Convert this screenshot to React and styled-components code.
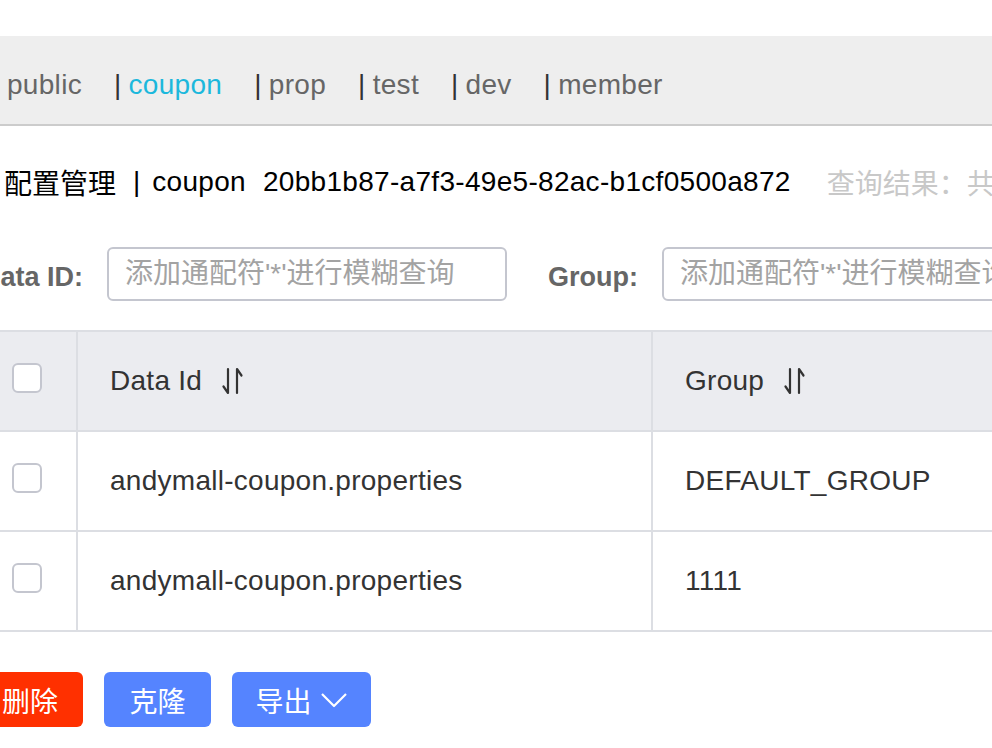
import styled, { createGlobalStyle } from "styled-components"

const GlobalStyle = createGlobalStyle`
    html, body {
        margin: 0;
        padding: 0;
        background: #FFFFFF;
        overflow: hidden;
    }
    body {
        font-family: "Liberation Sans", Arial, "Noto Sans CJK SC", sans-serif;
        color: #333333;
    }
`

const tabs = ["public", "coupon", "prop", "test", "dev", "member"]

const rows = [
    { id: "andymall-coupon.properties", group: "DEFAULT_GROUP" },
    { id: "andymall-coupon.properties", group: "1111" },
]

function SortIcon(){
    return(
        <Sort width="22" height="30" viewBox="0 0 22 30">
            <path d="M6 3 L6 27 L1.5 20.5" fill="none" stroke="#333" strokeWidth="2.2" strokeLinecap="round" strokeLinejoin="round"/>
            <path d="M15 27 L15 3 L19.5 9.5" fill="none" stroke="#333" strokeWidth="2.2" strokeLinecap="round" strokeLinejoin="round"/>
        </Sort>
    )
}

export default function App(){
    return(
        <>
            <GlobalStyle/>
            <Page>
                <TabBar>
                    {tabs.map((tab, i) => (
                        <Tab key={tab}>
                            {i > 0 && <TabSep>|</TabSep>}
                            <TabName $active={tab === "coupon"}>{tab}</TabName>
                        </Tab>
                    ))}
                </TabBar>

                <Title>
                    <span>配置管理</span>
                    <TitleSep>|</TitleSep>
                    <Latin>coupon</Latin>
                    <Uuid>20bb1b87-a7f3-49e5-82ac-b1cf0500a872</Uuid>
                    <Result>查询结果：共</Result>
                </Title>

                <Search>
                    <Label>Data ID:</Label>
                    <Input placeholder="添加通配符'*'进行模糊查询" $width={400}/>
                    <Label $gap={41}>Group:</Label>
                    <Input placeholder="添加通配符'*'进行模糊查询" $width={400}/>
                </Search>

                <Table>
                    <Row $head>
                        <Cell $center><Check/></Cell>
                        <Cell>Data Id<SortIcon/></Cell>
                        <Cell $last>Group<SortIcon/></Cell>
                    </Row>
                    {rows.map((r, i) => (
                        <Row key={i}>
                            <Cell $center><Check/></Cell>
                            <Cell>{r.id}</Cell>
                            <Cell $last>{r.group}</Cell>
                        </Row>
                    ))}
                </Table>

                <Actions>
                    <Button $color="#FF3000" $width={106}>删除</Button>
                    <Button $color="#5584FF" $width={107}>克隆</Button>
                    <Button $color="#5584FF" $width={139}>
                        导出
                        <svg width="28" height="16" viewBox="0 0 28 16">
                            <path d="M2 2 L14 14 L26 2" fill="none" stroke="#fff" strokeWidth="2.2" strokeLinejoin="round"/>
                        </svg>
                    </Button>
                </Actions>
            </Page>
        </>
    )
}

const Page = styled.div`
    width: 1500px;
    margin-left: -23px;
    padding-top: 36px;
`

const TabBar = styled.div`
    height: 90px;
    box-sizing: border-box;
    padding: 10px 0 0 30px;
    background: #EEEEEE;
    border-bottom: 2px solid #CCCCCC;
    display: flex;
    align-items: center;
    font-size: 28px;
    letter-spacing: 0.3px;
`

const Tab = styled.div`
    display: flex;
    align-items: center;
    margin-right: 32px;
`

const TabSep = styled.span`
    color: #333333;
    margin-right: 7px;
`

const TabName = styled.span`
    color: ${props => props.$active ? "#1CB8DC" : "#666666"};
`

const Title = styled.div`
    height: 56px;
    margin-top: 28px;
    padding-left: 27px;
    display: flex;
    align-items: center;
    font-size: 28px;
    color: #000000;
    white-space: nowrap;
`

const TitleSep = styled.span`
    margin: 0 12px 0 17px;
`

const Latin = styled.span`
    letter-spacing: 0.3px;
`

const Uuid = styled(Latin)`
    margin-left: 17px;
`

const Result = styled.span`
    margin-left: 36px;
    color: #C8C8C8;
`

const Search = styled.div`
    margin-top: 37px;
    padding-left: 4px;
    height: 54px;
    display: flex;
    align-items: center;
`

const Label = styled.label`
    font-size: 27px;
    font-weight: bold;
    color: #666666;
    margin-left: ${props => props.$gap || 0}px;
    margin-right: 24px;
    padding-top: 6px;
`

const Input = styled.input`
    width: ${props => props.$width}px;
    height: 54px;
    box-sizing: border-box;
    border: 2px solid #C4C6CF;
    border-radius: 6px;
    padding: 0 16px;
    font-family: inherit;
    font-size: 28px;
    outline: none;

    &::placeholder{
        color: #A3A3A3;
    }
`

const Table = styled.div`
    margin-top: 29px;
    border-top: 2px solid #DCDEE3;
`

const Row = styled.div`
    display: grid;
    grid-template-columns: 101px 575px 1fr;
    height: 100px;
    box-sizing: border-box;
    border-bottom: 2px solid #DCDEE3;
    background: ${props => props.$head ? "#EBECF0" : "#FFFFFF"};
`

const Cell = styled.div`
    display: flex;
    align-items: center;
    justify-content: ${props => props.$center ? "center" : "flex-start"};
    padding: ${props => props.$center ? "0" : "0 0 0 32px"};
    box-sizing: border-box;
    border-right: ${props => props.$last ? "none" : "2px solid #DCDEE3"};
    font-size: 28px;
    letter-spacing: 0.27px;
    color: #333333;
    white-space: nowrap;
`

const Check = styled.span`
    width: 30px;
    height: 30px;
    box-sizing: border-box;
    border: 2px solid #C4C6CF;
    border-radius: 6px;
    background: #FFFFFF;
    margin-bottom: 6px;
`

const Sort = styled.svg`
    margin-left: 20px;
`

const Actions = styled.div`
    margin-top: 40px;
    display: flex;
    gap: 21px;
`

const Button = styled.button`
    width: ${props => props.$width}px;
    height: 55px;
    border: none;
    border-radius: 6px;
    background: ${props => props.$color};
    color: #FFFFFF;
    font-family: inherit;
    font-size: 28px;
    display: flex;
    align-items: center;
    justify-content: center;
    gap: 8px;
    padding: 0;
`
